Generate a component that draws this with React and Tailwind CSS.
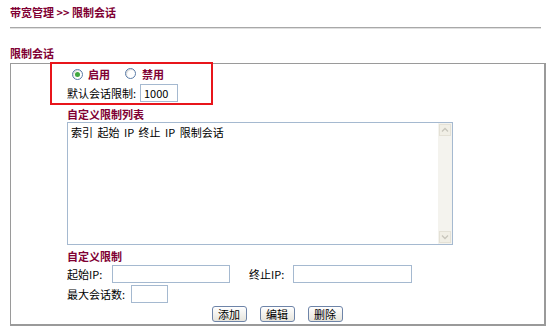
import React from 'react';

const font = { fontFamily: '"Noto Sans CJK SC", "Liberation Sans", sans-serif' };

const Radio = ({ checked }) => (
  <span className="inline-flex items-center justify-center w-[11px] h-[11px] rounded-full border border-[#5a7ca8] bg-white shadow-[inset_1px_1px_1px_rgba(0,0,0,0.15)]">
    {checked && <span className="w-[5px] h-[5px] rounded-full bg-[#3fa73f]" />}
  </span>
);

const Field = ({ w, value }) => (
  <div className={`${w} h-[18px] border border-[#a5b9d0] bg-white px-[3px] flex items-center text-[11px] text-black`}>
    {value}
  </div>
);

const Btn = ({ children }) => (
  <button className="w-[35px] h-[16px] rounded-[3px] border border-[#6e84a8] bg-gradient-to-b from-white to-[#e6e4dc] text-[11px] leading-[14px] text-black flex items-center justify-center">
    {children}
  </button>
);

const App = () => {
  return (
    <div className="w-[551px] h-[334px] bg-white overflow-hidden text-[11px] text-black" style={font}>
      <div className="pl-[10px] pt-[6px] h-[20px] leading-[13px] font-bold text-[#800033]">
        带宽管理 &gt;&gt; 限制会话
      </div>
      <div className="mx-[10px] mt-[7px] h-[2px] border-t border-[#a8a8a8] border-b border-b-[#e0e0e0]" />

      <div className="pl-[10px] mt-[18px] h-[13px] leading-[13px] font-bold text-[#800033]">限制会话</div>

      <div className="ml-[10px] mt-[3px] w-[536px] h-[263px] border border-[#9a9a9a] border-r-2 border-b-2 flex flex-col">
        {/* highlighted area */}
        <div className="relative -mt-[2px] ml-[39px] w-[163px] h-[43px] border-2 border-[#e8151b] pl-[15px] pt-[4px]">
          <div className="flex items-center h-[12px] pl-[5px]">
            <Radio checked />
            <span className="ml-[5px] font-bold text-[#800033]">启用</span>
            <span className="ml-[15px]"><Radio /></span>
            <span className="ml-[6px] font-bold text-[#800033]">禁用</span>
          </div>
          <div className="flex items-center mt-[4px]">
            <span className="w-[73px]">默认会话限制:</span>
            <Field w="w-[38px]" value="1000" />
          </div>
        </div>

        <div className="pl-[56px] flex flex-col">
          <div className="mt-[3px] h-[13px] leading-[13px] font-bold text-[#800033]">自定义限制列表</div>
          <div className="mt-[1px] w-[386px] h-[123px] border border-[#a5b9d0] bg-white flex">
            <div className="flex-1 pl-[3px] pt-[3px] leading-[13px] whitespace-pre [word-spacing:2px]">索引 起始 IP 终止 IP 限制会话</div>
            <div className="w-[14px] bg-[#f4f3ee] flex flex-col justify-between items-center py-[1px]">
              <svg width="12" height="12" viewBox="0 0 12 12">
                <rect x="0.5" y="0.5" width="11" height="11" fill="#f1efe6" stroke="#e4e1d6" />
                <path d="M3 7.5 L6 4.5 L9 7.5" fill="none" stroke="#c8c6bc" strokeWidth="1.3" />
              </svg>
              <svg width="12" height="12" viewBox="0 0 12 12">
                <rect x="0.5" y="0.5" width="11" height="11" fill="#f1efe6" stroke="#e4e1d6" />
                <path d="M3 4.5 L6 7.5 L9 4.5" fill="none" stroke="#c8c6bc" strokeWidth="1.3" />
              </svg>
            </div>
          </div>

          <div className="mt-[5px] h-[13px] leading-[13px] font-bold text-[#800033]">自定义限制</div>
          <div className="mt-[2px] flex items-center">
            <span className="w-[45px]">起始IP:</span>
            <Field w="w-[118px]" />
            <span className="ml-[19px] w-[44px]">终止IP:</span>
            <Field w="w-[119px]" />
          </div>
          <div className="mt-[2px] flex items-center">
            <span className="w-[64px]">最大会话数:</span>
            <Field w="w-[37px]" />
          </div>
        </div>

        <div className="mt-[3px] flex justify-center gap-[13px] pr-[1px]">
          <Btn>添加</Btn>
          <Btn>编辑</Btn>
          <Btn>删除</Btn>
        </div>
      </div>
    </div>
  );
};

export default App;
